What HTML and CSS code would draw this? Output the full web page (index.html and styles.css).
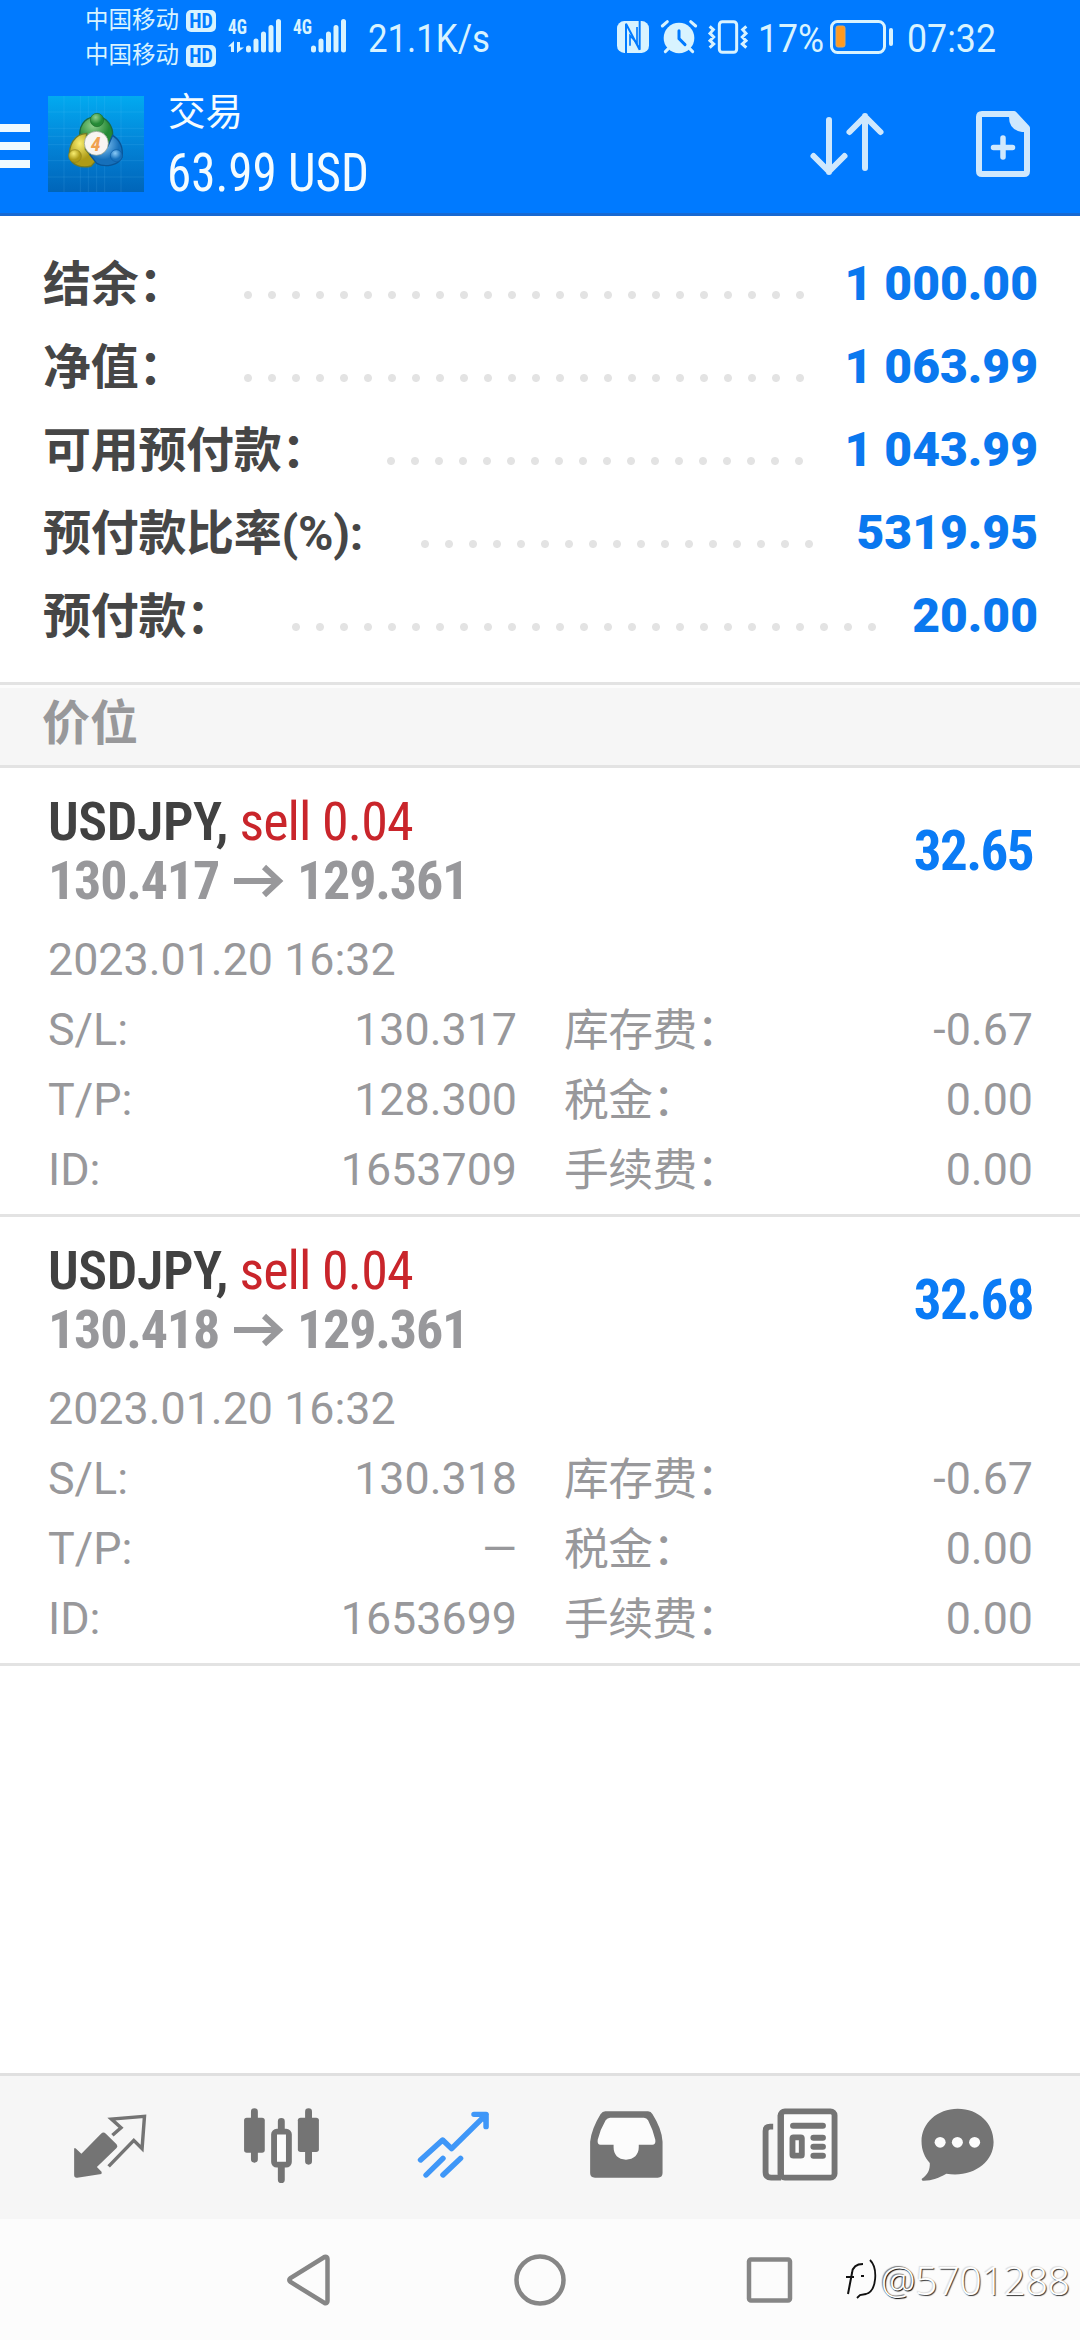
FILE: index.html
```html
<!DOCTYPE html>
<html lang="zh-CN">
<head>
<meta charset="utf-8">
<title>交易</title>
<link rel="stylesheet" href="styles.css">
</head>
<body>
<div class="screen">
  <header class="header">
    <div class="status">
      <div class="carriers">
        <div class="carrier"><span>中国移动</span><b class="hd">HD</b></div>
        <div class="carrier"><span>中国移动</span><b class="hd">HD</b></div>
      </div>
      <svg class="signal" width="54" height="34" viewBox="228 19 54 34">
        <text class="net" x="228" y="34" textLength="19" lengthAdjust="spacingAndGlyphs">4G</text>
        <path d="M232.500 52V45.500M238.500 42V48.500" stroke-width="3"/>
        <path class="fill" d="M228 46.500L234 41V46.500ZM237 47.500H244L237 53Z"/>
        <path d="M248.500 48V50M256 41V50M263.500 34V50M271 27.500V50M278.500 21.500V50" stroke-width="5" stroke-linecap="round"/>
      </svg>
      <svg class="signal second" width="54" height="34" viewBox="293 19 54 34">
        <text class="net" x="293" y="34" textLength="19" lengthAdjust="spacingAndGlyphs">4G</text>
        <path d="M313.500 48V50M321 41V50M328.500 34V50M336 27.500V50M343.500 21.500V50" stroke-width="5" stroke-linecap="round"/>
      </svg>
      <svg class="speed" width="124" height="40"><text x="0" y="34" textLength="122" lengthAdjust="spacingAndGlyphs">21.1K/s</text></svg>
      <div class="status-right">
        <svg class="nfc" width="32" height="32" viewBox="0 0 96 96">
          <rect class="fill" width="96" height="96" rx="22"/>
          <path class="cut" d="M27 98V8L68 86V-2" stroke-width="6"/>
          <path class="cut" d="M39 74V44L60 66V18" stroke-width="5"/>
        </svg>
        <svg class="alarm" width="36" height="34" viewBox="0 0 108 102">
          <circle class="fill" cx="54" cy="54" r="46"/>
          <path d="M4 18L19 5M104 18L89 5M22 86L13 95M86 86L95 95" stroke-width="9" stroke-linecap="round"/>
          <path class="cut" d="M54 32V56L72 74" stroke-width="9" stroke-linecap="round"/>
        </svg>
        <svg class="vibrate" width="40" height="34" viewBox="0 0 120 102">
          <rect x="34" y="5" width="52" height="92" rx="9" stroke-width="9"/>
          <path d="M5 19L16 29L6 40L17 51L6 62L17 72L5 83M115 19L104 29L114 40L103 51L114 62L103 72L115 83" stroke-width="9"/>
        </svg>
        <svg class="percent" width="66" height="40"><text x="-1" y="34" textLength="66" lengthAdjust="spacingAndGlyphs">17%</text></svg>
        <svg class="battery" width="64" height="34" viewBox="0 0 64 34">
          <rect x="1.500" y="1.500" width="53" height="31" rx="6" stroke-width="3"/>
          <rect class="level" x="6" y="6" width="9" height="21" rx="2"/>
          <path d="M61 10V24" stroke-width="4" stroke-linecap="round"/>
        </svg>
        <svg class="clock" width="90" height="40"><text x="0" y="34" textLength="89" lengthAdjust="spacingAndGlyphs">07:32</text></svg>
      </div>
    </div>
    <div class="appbar">
      <div class="menu"><i></i><i></i><i></i></div>
      <svg class="logo" width="96" height="96" viewBox="0 0 288 288">
        <defs>
          <linearGradient id="bg" x1="0" y1="0" x2="0" y2="1"><stop offset="0" stop-color="#02aaf0"/><stop offset=".5" stop-color="#0384d8"/><stop offset="1" stop-color="#0065b9"/></linearGradient>
          <radialGradient id="g" cx=".4" cy=".3"><stop offset="0" stop-color="#8fd08c"/><stop offset="1" stop-color="#248936"/></radialGradient>
          <radialGradient id="y" cx=".4" cy=".3"><stop offset="0" stop-color="#f8ed70"/><stop offset="1" stop-color="#ae9b16"/></radialGradient>
          <radialGradient id="b" cx=".4" cy=".3"><stop offset="0" stop-color="#8acaf7"/><stop offset="1" stop-color="#1670bb"/></radialGradient>
        </defs>
        <rect width="288" height="288" fill="url(#bg)"/>
        <path d="M48 0V288M97 0V288M121 0V288M146 0V288M170 0V288M219 0V288M0 48H288M0 97H288M0 121H288M0 146H288M0 194H288M0 243H288" stroke="#7cd4ff" stroke-opacity=".2" stroke-width="2"/>
        <path d="M95 120C94 78 120 62 146 62C176 62 196 90 194 120L186 150L162 130L118 124Z" fill="url(#g)" stroke="#1b6a45" stroke-width="4"/>
        <path d="M116 112C78 114 62 148 64 184C72 208 100 218 130 210L142 196L112 160Z" fill="url(#y)" stroke="#6f7b28" stroke-width="4"/>
        <path d="M194 118C216 132 226 156 222 184C212 208 170 216 146 202L126 176L180 150Z" fill="url(#b)" stroke="#0a5597" stroke-width="4"/>
        <circle cx="147" cy="72" r="20" fill="url(#g)" stroke="#1c6b2c" stroke-width="2"/>
        <circle cx="81" cy="180" r="19" fill="url(#y)" stroke="#8b7f1a" stroke-width="2"/>
        <circle cx="205" cy="179" r="18" fill="url(#b)" stroke="#0b5ba5" stroke-width="2"/>
        <circle cx="145" cy="142" r="36" fill="#f8f5f2" stroke="#8a9a8a" stroke-width="2"/>
        <text class="four" x="143" y="165" text-anchor="middle">4</text>
      </svg>
      <div class="title">
        <h1>交易</h1>
        <svg class="profit" width="200" height="50"><text x="-1" y="44" textLength="202" lengthAdjust="spacingAndGlyphs">63.99 USD</text></svg>
      </div>
      <svg class="sort" width="74" height="66" viewBox="0 0 74 66">
        <path d="M19 9V61M3.500 45L19 60.500L34.500 45M55 57V5M39.500 21L55 5.500L70.500 21" stroke-width="6" stroke-linecap="round" stroke-linejoin="round"/>
      </svg>
      <svg class="order" width="54" height="66" viewBox="0 0 54 66">
        <path d="M6 3H38L51 17V60Q51 63 48 63H6Q3 63 3 60V6Q3 3 6 3Z" stroke-width="6" stroke-linejoin="round"/>
        <path class="fill" d="M33 4H39L51 17V21H46Q33 19 33 6Z"/>
        <path d="M27 27V46M17.500 36.500H36.500" stroke-width="5.500" stroke-linecap="round"/>
      </svg>
    </div>
  </header>

  <section class="account">
    <div class="row"><span>结余：</span><i class="dots"></i><b>1 000.00</b></div>
    <div class="row"><span>净值：</span><i class="dots"></i><b>1 063.99</b></div>
    <div class="row"><span>可用预付款：</span><i class="dots"></i><b>1 043.99</b></div>
    <div class="row"><span>预付款比率(%):</span><i class="dots"></i><b>5319.95</b></div>
    <div class="row"><span>预付款：</span><i class="dots"></i><b>20.00</b></div>
  </section>

  <h2 class="section">价位</h2>

  <article class="position">
    <div class="summary">
      <div>
        <div class="symbol"><b>USDJPY,</b> <span>sell 0.04</span></div>
        <div class="prices">130.417<svg width="48" height="34" viewBox="0 0 48 34"><path d="M0 17H45M30 3L45 17L30 31" stroke-width="6"/></svg>129.361</div>
      </div>
      <b class="pl">32.65</b>
    </div>
    <div class="date">2023.01.20 16:32</div>
    <dl class="details">
      <div><dt>S/L:</dt><dd>130.317</dd></div><div><dt class="cjk">库存费：</dt><dd>-0.67</dd></div>
      <div><dt>T/P:</dt><dd>128.300</dd></div><div><dt class="cjk">税金：</dt><dd>0.00</dd></div>
      <div><dt>ID:</dt><dd>1653709</dd></div><div><dt class="cjk">手续费：</dt><dd>0.00</dd></div>
    </dl>
  </article>

  <article class="position">
    <div class="summary">
      <div>
        <div class="symbol"><b>USDJPY,</b> <span>sell 0.04</span></div>
        <div class="prices">130.418<svg width="48" height="34" viewBox="0 0 48 34"><path d="M0 17H45M30 3L45 17L30 31" stroke-width="6"/></svg>129.361</div>
      </div>
      <b class="pl">32.68</b>
    </div>
    <div class="date">2023.01.20 16:32</div>
    <dl class="details">
      <div><dt>S/L:</dt><dd>130.318</dd></div><div><dt class="cjk">库存费：</dt><dd>-0.67</dd></div>
      <div><dt>T/P:</dt><dd>—</dd></div><div><dt class="cjk">税金：</dt><dd>0.00</dd></div>
      <div><dt>ID:</dt><dd>1653699</dd></div><div><dt class="cjk">手续费：</dt><dd>0.00</dd></div>
    </dl>
  </article>

  <nav class="tabs">
    <a><svg viewBox="203 142 232 240" preserveAspectRatio="none">
      <path class="fill" d="M293 222Q300 215 307 222L338 254Q343 260 338 265L281 322L295 337L294 343L224 354Q215 355 215 346V266H219L236 282Z"/>
      <path d="M326 227L351 204L323 178L419 170L412 267L388 242L315 320" stroke-width="10"/>
    </svg></a>
    <a><svg viewBox="703 142 232 240" preserveAspectRatio="none">
      <path d="M739 156V299M817 185V215M817 315V360M896 156V305" stroke-width="20" stroke-linecap="round"/>
      <rect class="fill" x="709" y="174" width="60" height="105" rx="8"/>
      <rect class="fill" x="865" y="174" width="61" height="103" rx="8"/>
      <rect class="hollow" x="796" y="216" width="43" height="99" rx="8" stroke-width="17"/>
    </svg></a>
    <a class="active"><svg viewBox="1202 142 232 240" preserveAspectRatio="none">
      <path d="M1221 301L1285 241L1311 267L1411 165M1376 164H1411V201M1237 346L1286 296M1286 346L1337 296" stroke-width="16" stroke-linecap="round" stroke-linejoin="round"/>
      <path class="fill" d="M1385 164H1411V195Z"/>
    </svg></a>
    <a><svg viewBox="134 142 232 240" preserveAspectRatio="none">
      <path class="fill" d="M190 155H314Q322 155 327 164Q354 208 356 246V340Q356 354 342 354H160Q146 354 146 340V246Q150 208 176 164Q182 155 190 155Z"/>
      <path class="hole" d="M204 174H302Q310 174 314 182Q328 210 335 240Q337 255 326 255H287V263C287 285 273 300 250 300C227 300 214 285 214 263V255H176Q166 255 168 240Q175 210 191 182Q196 174 204 174Z"/>
    </svg></a>
    <a><svg viewBox="633 142 232 240" preserveAspectRatio="none">
      <rect class="hollow" x="699" y="155" width="156" height="199" rx="12" stroke-width="17"/>
      <path d="M677 201H668Q655 201 655 214V338Q655 354 671 354H700" stroke-width="17"/>
      <path class="fill" d="M690 165H708V350H690Z"/>
      <path d="M735 198H821M794 234H821M794 261H821M794 288H821" stroke-width="18" stroke-linecap="round"/>
      <rect class="hollow" x="733" y="233" width="27" height="55" stroke-width="17" rx="3"/>
    </svg></a>
    <a><svg viewBox="1093 142 232 240" preserveAspectRatio="none">
      <path class="fill" d="M1214 147C1275 147 1318 191 1318 247C1318 310 1254 355 1181 342C1160 354 1140 363 1116 363Q1108 363 1110 357C1127 345 1134 331 1133 310C1118 293 1109 272 1109 245C1109 190 1155 147 1214 147Z"/>
      <circle class="hole" cx="1163" cy="248" r="16"/><circle class="hole" cx="1213" cy="248" r="16"/><circle class="hole" cx="1263" cy="248" r="16"/>
    </svg></a>
  </nav>

  <footer class="sysnav">
    <svg width="50" height="52" viewBox="0 0 50 52"><path d="M39.500 3L5.500 24Q3 26 5.500 28L39.500 49Q42.500 50 42.500 47V5Q42.500 2 39.500 3Z"/></svg>
    <svg width="50" height="52" viewBox="0 0 50 52"><circle cx="25" cy="26" r="23.500"/></svg>
    <svg width="50" height="52" viewBox="0 0 50 52"><rect x="4" y="5.500" width="41" height="41" rx="2"/></svg>
    <div class="watermark">
      <svg width="32" height="42" viewBox="0 0 32 42">
        <path d="M3 35L7 14Q8 5 18 5M1 18H9M16 17H19" stroke-width="2"/>
        <path d="M25 1C33 9 32 32 21 35L15 36L12 39" stroke-width="1.800"/>
      </svg>
      <span><b>@</b>5701288</span>
    </div>
  </footer>
</div>
</body>
</html>
```
FILE: styles.css
```css
* { box-sizing: border-box; }
body { margin: 0; font-family: Roboto, "Noto Sans CJK SC", sans-serif; background: #fff; }
h1, h2, dl, dd { margin: 0; }
svg { display: block; flex: none; overflow: visible; }
:where(svg:not(.logo)) path, :where(svg:not(.logo)) rect, :where(svg:not(.logo)) circle { fill: none; stroke: currentColor; }
svg .fill { fill: currentColor; stroke: none; }
svg .cut { stroke: #007aff; }

.screen { width: 1080px; height: 2340px; display: flex; flex-direction: column; overflow: hidden; }

.header { height: 216px; background: #007aff; border-bottom: 3px solid #1769d2; color: #d8f3ff; }
.status { height: 72px; display: flex; align-items: flex-start; padding-left: 85px; }
.carriers { padding-top: 3px; }
.carrier { height: 35px; display: flex; align-items: center; gap: 7px; font-size: 23.500px; line-height: 35px; }
.hd { width: 30px; height: 22px; border-radius: 5px; background: #d8f3ff; color: #007aff; font: 700 20px/22px "Roboto Condensed", Roboto, sans-serif; text-align: center; }
.signal { margin: 19px 0 0 12px; }
.signal.second { margin-left: 11px; }
.net { font: 700 20px "Roboto Condensed", Roboto, sans-serif; fill: currentColor; }
.speed, .percent, .clock { margin-top: 18px; font-size: 38px; fill: currentColor; }
.speed { margin-left: 21px; }
.status-right { margin-left: auto; padding: 0 83px 0 0; display: flex; }
.nfc { margin: 21px 12px 0 0; }
.alarm, .vibrate { margin: 20px 11px 0 0; }
.percent { margin-right: 5px; }
.battery { margin: 20px 13px 0 0; }
svg .level { fill: #ff9a1f; stroke: #d9a766; stroke-width: 1; }

.appbar { height: 141px; display: flex; align-items: flex-start; }
.menu { width: 30px; padding-top: 52px; display: grid; gap: 10px; }
.menu i { height: 8px; background: #effaff; }
.logo { margin: 24px 0 0 18px; }
.four { font: italic 700 60px "Roboto Condensed", Roboto, sans-serif; fill: #f0a050; }
.title { margin-left: 24px; color: #f4fcff; }
.title h1 { margin-top: 20px; font-size: 37.500px; font-weight: 400; line-height: 40px; }
.profit { margin-top: 15px; font: 53px "Roboto Condensed", Roboto, sans-serif; fill: currentColor; }
.sort { margin: 39px 0 0 auto; color: #cfe8fd; }
.order { margin: 39px 50px 0 92px; color: #cfe8fd; }

.account { height: 466px; padding: 26px 42px 0 43px; }
.row { height: 83px; display: flex; font-size: 48px; line-height: 83px; font-weight: 700; color: #464646; }
.row span { padding-top: 1px; letter-spacing: -.3px; }
.row b { color: #0a78ef; }
.dots { flex: 1; margin: 0 29px 0 50px; background: radial-gradient(circle at 12px 53px, #e3e3e3 3.500px, transparent 4.500px) 0 0 / 24px 83px repeat-x; }

.section { height: 86px; border-top: 3px solid #e3e3e3; border-bottom: 3px solid #e3e3e3; background: #f6f6f6; box-shadow: inset 0 3px #fcfcfc; padding-left: 42px; font-size: 48px; line-height: 77px; color: #98989a; }

.position { height: 449px; padding: 25px 47px 0 48px; border-bottom: 3px solid #e3e3e3; color: #98989b; font-size: 44.800px; }
.summary { height: 117px; display: flex; align-items: center; justify-content: space-between; font-family: "Roboto Condensed", Roboto, sans-serif; font-size: 54px; line-height: 58.500px; }
.symbol b { font-weight: 600; color: #414141; letter-spacing: -.4px; }
.symbol span { color: #c9252b; letter-spacing: -.9px; margin-left: -1px; }
.prices { display: flex; align-items: center; gap: 15px; font-weight: 700; letter-spacing: -1.200px; }
.pl { font-size: 55px; line-height: 58px; margin-top: -1px; letter-spacing: -1.600px; color: #0a7bf5; }
.date { margin-top: 15px; line-height: 70px; }
.details { display: grid; grid-template-columns: 469px 470px; column-gap: 46px; line-height: 70px; }
.details div { display: flex; justify-content: space-between; }
.cjk { padding: 1px 0 0 1px; height: 70px; letter-spacing: -.6px; }

.tabs { margin-top: auto; height: 146px; border-top: 3px solid #e0e0e0; background: #f6f6f6; display: flex; padding-left: 24px; color: #747474; flex: none; }
.tabs a { flex: 0 0 172px; display: flex; justify-content: center; padding-top: 31px; }
.tabs a:last-child { flex-basis: 143px; }
.tabs svg { width: 80px; height: 80px; }
.tabs .active { color: #3f97f8; }
svg .hole { fill: #fcfcfc; stroke: none; }
.tabs .hollow { fill: #fcfcfc; }

.sysnav { flex: none; height: 121px; background: #fcfcfc; display: flex; align-items: center; justify-content: center; gap: 180px; color: #868686; position: relative; }
.sysnav > svg { stroke-width: 4.500px; }
.watermark { position: absolute; left: 845px; top: 40px; display: flex; gap: 4px; color: #111; }
.watermark span { font: 300 39px/42px "Open Sans", "Noto Sans", sans-serif; letter-spacing: -.2px; color: #fff; text-shadow: 1px 1px 1px #333, -1px -1px 1px #ddd; }
.watermark b { font-weight: 300; text-shadow: 1px 1px 1px #000, -1px -1px 1px #777; }
```
